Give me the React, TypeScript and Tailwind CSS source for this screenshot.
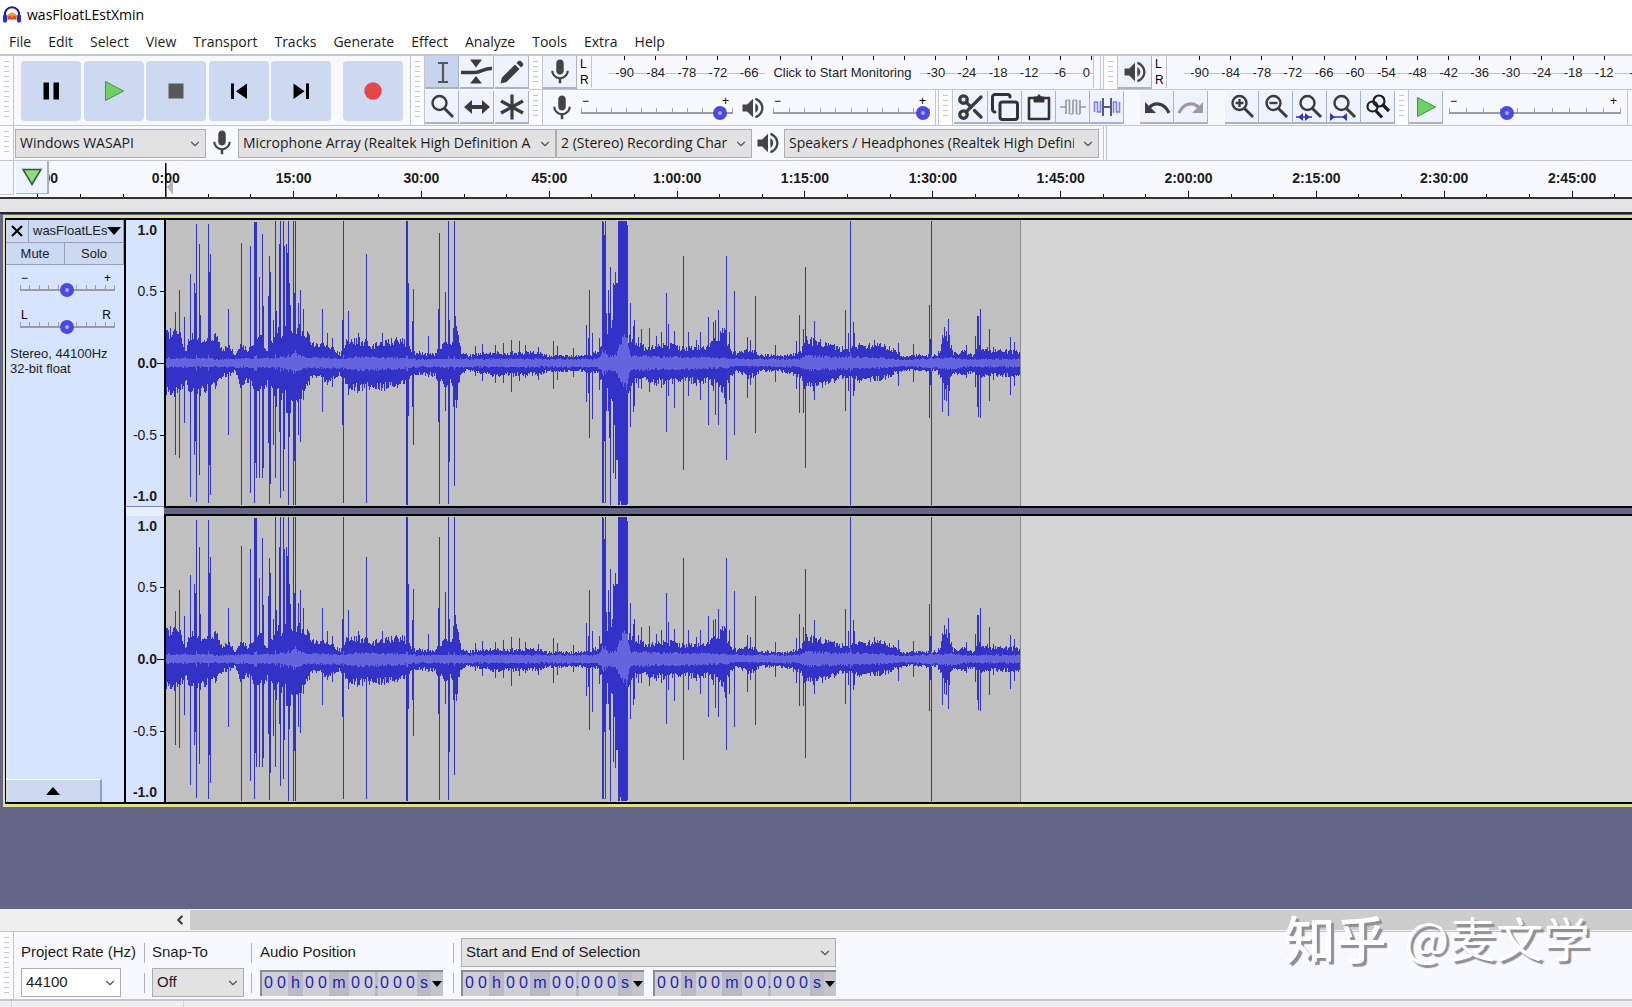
import React, { useState } from 'react';
import { ChevronDown, ChevronLeft, Copy, Scissors } from 'lucide-react';
import { MdMic, MdVolumeUp } from 'react-icons/md';

const MENUS = ['File', 'Edit', 'Select', 'View', 'Transport', 'Tracks', 'Generate', 'Effect', 'Analyze', 'Tools', 'Extra', 'Help'];

const TIMES = ['-15:00', '0:00', '15:00', '30:00', '45:00', '1:00:00', '1:15:00', '1:30:00', '1:45:00', '2:00:00', '2:15:00', '2:30:00', '2:45:00'];

// --- Waveform data ---
// [x, level above zero, level below zero], in pixels
type Point = [number, number, number];

const ENVELOPE: Point[] = [
  [0, 31, 30], [14, 26, 28], [19, 12, 15], [24, 28, 33], [37, 22, 25], [44, 27, 27], [51, 24, 20], [57, 12, 12],
  [62, 20, 12], [69, 8, 7], [74, 18, 22], [81, 13, 18], [87, 18, 24], [94, 25, 28], [101, 12, 20], [107, 28, 28],
  [127, 36, 36], [137, 32, 30], [142, 28, 20], [147, 18, 12], [160, 18, 17], [174, 9, 11], [181, 22, 24], [194, 22, 26],
  [207, 17, 22], [221, 21, 25], [236, 22, 20], [249, 10, 10], [269, 9, 12], [274, 17, 20], [292, 24, 20], [295, 11, 10],
  [302, 8, 7], [327, 10, 12], [374, 10, 11], [381, 7, 8], [417, 7, 8], [431, 11, 9], [436, 22, 20], [447, 40, 40],
  [463, 24, 25], [469, 20, 18], [481, 14, 17], [501, 18, 20], [514, 15, 17], [527, 15, 18], [544, 18, 18], [557, 30, 26],
  [564, 13, 13], [571, 9, 8], [584, 14, 14], [594, 8, 8], [617, 7, 8], [634, 10, 14], [639, 23, 24], [662, 19, 22],
  [674, 14, 14], [684, 14, 13], [689, 17, 17], [714, 18, 16], [727, 13, 11], [737, 7, 7], [771, 8, 8], [778, 24, 23],
  [783, 22, 20], [787, 10, 9], [797, 11, 11], [806, 8, 9], [814, 16, 13], [824, 12, 12], [854, 11, 12],
];

const SPIKES: Point[] = [
  [9, 51, 92], [13, 73, 95], [18, 46, 60], [24, 89, 134], [28, 80, 92], [29, 70, 78], [30, 139, 139], [33, 119, 112],
  [34, 48, 33], [42, 139, 140], [43, 91, 102], [44, 109, 132], [62, 54, 72], [75, 120, 142], [84, 117, 130], [88, 141, 140],
  [89, 141, 100], [90, 141, 115], [93, 86, 115], [96, 129, 115], [97, 57, 105], [102, 67, 80], [103, 107, 141], [104, 91, 121],
  [107, 43, 82], [109, 142, 115], [110, 52, 44], [113, 119, 69], [114, 142, 135], [117, 142, 128], [118, 117, 86],
  [120, 119, 50], [121, 110, 50], [122, 142, 142], [123, 80, 74], [124, 58, 50], [127, 142, 142], [128, 70, 98],
  [129, 142, 142], [132, 60, 72], [134, 73, 79], [137, 54, 37], [141, 32, 23], [156, 54, 49], [161, 30, 22], [166, 25, 24],
  [176, 43, 62], [177, 142, 140], [182, 52, 32], [192, 30, 28], [200, 109, 140], [216, 30, 25], [240, 142, 142], [241, 142, 142],
  [242, 80, 53], [246, 42, 44], [247, 74, 82], [262, 27, 14], [272, 54, 59], [273, 130, 141], [279, 71, 48], [282, 142, 141],
  [283, 43, 99], [287, 35, 44], [288, 142, 123], [289, 47, 37], [290, 37, 45], [291, 32, 37], [309, 17, 13], [316, 19, 18],
  [329, 18, 20], [337, 20, 20], [345, 23, 29], [353, 22, 18], [359, 18, 15], [372, 16, 17], [387, 22, 26], [391, 17, 17],
  [407, 15, 14], [420, 38, 39], [422, 25, 30], [423, 73, 75], [426, 30, 56], [433, 25, 27], [436, 142, 140], [437, 141, 140],
  [438, 128, 78], [439, 142, 140], [440, 50, 48], [442, 73, 48], [443, 50, 75], [444, 96, 142], [447, 80, 110], [448, 78, 62],
  [449, 91, 116], [450, 80, 97], [451, 80, 97], [452, 142, 142], [453, 142, 142], [454, 142, 138], [455, 142, 142],
  [456, 142, 142], [457, 142, 142], [458, 142, 142], [459, 142, 142], [460, 142, 142], [461, 138, 141], [463, 28, 28],
  [464, 60, 64], [467, 37, 49], [468, 43, 43], [472, 26, 25], [475, 34, 26], [483, 35, 29], [490, 27, 23], [495, 31, 25],
  [500, 70, 69], [502, 39, 33], [508, 32, 45], [517, 107, 107], [522, 31, 33], [530, 23, 23], [534, 31, 37], [542, 46, 62],
  [547, 41, 28], [549, 43, 52], [552, 53, 62], [556, 35, 30], [558, 35, 35], [559, 33, 41], [560, 107, 97], [563, 31, 37],
  [568, 72, 72], [581, 26, 35], [584, 23, 22], [589, 67, 70], [609, 18, 19], [630, 22, 26], [633, 48, 50], [637, 34, 50],
  [639, 96, 105], [648, 42, 37], [679, 53, 48], [682, 30, 28], [684, 142, 142], [687, 41, 33], [688, 30, 28], [708, 23, 18],
  [732, 20, 23], [747, 19, 19], [763, 58, 55], [764, 24, 22], [765, 142, 142], [776, 28, 49], [778, 36, 37], [780, 32, 38],
  [782, 44, 53], [783, 28, 28], [800, 18, 15], [809, 27, 24], [811, 47, 44], [812, 47, 54], [814, 54, 55], [823, 34, 38],
  [827, 16, 17], [844, 26, 32], [848, 21, 23],
];

const RMS: Point[] = [
  [0, 5, 4], [60, 4, 4], [118, 5, 5], [130, 9, 8], [138, 6, 5], [176, 4, 5], [190, 6, 7], [230, 5, 6], [250, 4, 4],
  [430, 4, 4], [438, 10, 9], [442, 6, 7], [450, 8, 10], [457, 22, 20], [461, 24, 22], [464, 7, 7], [560, 5, 5],
  [570, 4, 3], [633, 4, 4], [640, 7, 7], [715, 5, 5], [735, 3, 3], [780, 5, 6], [800, 4, 4], [854, 4, 4],
];

const CLIP_WIDTH = 854;
const ZERO = 143;

function sample(points: Point[], x: number, side: 1 | 2) {
  const next = points.findIndex(p => p[0] > x);
  if (next < 1) return points[points.length - 1][side];
  const a = points[next - 1];
  const b = points[next];
  return a[side] + ((b[side] - a[side]) * (x - a[0])) / (b[0] - a[0]);
}

// Repeatable noise, so a clip looks the same on each render
function noise(n: number) {
  const v = Math.sin(n * 127.1 + 11.7) * 43758.5453;
  return v - Math.floor(v);
}

function buildPath(gain: number) {
  let peaks = '';
  let rms = '';
  for (let x = 0; x < CLIP_WIDTH; x++) {
    const spike = SPIKES.find(s => s[0] === x);
    const up0 = sample(ENVELOPE, x, 1) * (0.78 + 0.42 * noise(x));
    const down0 = sample(ENVELOPE, x, 2) * (0.78 + 0.42 * noise(x * 3));
    let up = spike ? Math.max(up0, spike[1]) : up0;
    let down = spike ? Math.max(down0, spike[2]) : down0;
    if (up < 138) up *= gain;
    if (down < 138) down *= gain;
    peaks += `M${x + 0.5} ${Math.round(ZERO - up)}V${Math.round(ZERO + down)}`;
    const loud = spike && spike[1] > 138 ? 3 : 0;
    const r1 = sample(RMS, x, 1) * (0.8 + 0.4 * noise(x * 5)) + loud;
    const r2 = sample(RMS, x, 2) * (0.8 + 0.4 * noise(x * 7)) + loud;
    rms += `M${x + 0.5} ${Math.round(ZERO - r1)}V${Math.round(ZERO + r2)}`;
  }
  return { peaks, rms };
}

const CHANNELS = [buildPath(1), buildPath(0.94)];

// --- Icons ---
function Mic() {
  return <MdMic className="size-[30px] text-[#444]" />;
}

function Speaker() {
  return <MdVolumeUp className="size-7 text-[#444]" />;
}

function Magnifier({ children }: { children?: React.ReactNode }) {
  return (
    <svg viewBox="0 0 28 28" className="size-7" fill="none" stroke="#3c3c3c" strokeWidth="2.4">
      <circle cx="11.5" cy="10" r="7" />
      <path d="M16.5 15.5L25 24" strokeWidth="3" />
      {children}
    </svg>
  );
}

const ICONS: Record<string, React.ReactNode> = {
  pause: <svg viewBox="0 0 24 24" className="size-6"><path d="M4.500 3.500h5.500v17H4.500zM14.500 3.500h5.500v17h-5.500z" /></svg>,
  play: <svg viewBox="0 0 24 24" className="size-6"><path d="M3.500 2.500v19L21.500 12z" fill="#6fd163" stroke="#4c8f48" /></svg>,
  stop: <svg viewBox="0 0 24 24" className="size-6"><path d="M4.500 4.500h15v15h-15z" fill="#595959" /></svg>,
  start: <svg viewBox="0 0 24 24" className="size-6"><path d="M4 4.500h3v15.500H4zM20 4.500V20L9 12.200z" /></svg>,
  end: <svg viewBox="0 0 24 24" className="size-6"><path d="M4.500 4.500V20l11-7.800zM17 4.500h3V20h-3z" /></svg>,
  record: <svg viewBox="0 0 24 24" className="size-6"><circle cx="12" cy="12" r="8.700" fill="#e64646" /></svg>,
  cursor: (
    <svg viewBox="0 0 28 28" className="size-7" fill="none" stroke="#555" strokeWidth="2.200">
      <path d="M10 5h10M15 5v19M10 24h10" />
    </svg>
  ),
  envelope: (
    <svg viewBox="0 0 32 28" className="h-7 w-8" fill="#3c3c3c">
      <path d="M9 1.500h12l-6 8zM15 18l6 7.500H9z" />
      <path d="M0 14.500h14c6 0 9-4.500 17-4" fill="none" stroke="#3c3c3c" strokeWidth="3.400" />
    </svg>
  ),
  pencil: (
    <svg viewBox="0 0 28 28" className="size-7" fill="#3c3c3c">
      <path d="M2.500 25.500l1.500-6L17 6.500l4.500 4.500L8.500 24zM18.500 5l2-2c1.500-1.500 6 2.500 4.500 4.500l-2 2z" />
    </svg>
  ),
  zoom: <Magnifier />,
  shift: (
    <svg viewBox="0 0 28 28" className="size-7" fill="#3c3c3c">
      <path d="M1 14l8-7v5h10V7l8 7-8 7v-5H9v5z" />
    </svg>
  ),
  multi: (
    <svg viewBox="0 0 28 28" className="size-7" stroke="#3c3c3c" strokeWidth="3.200">
      <path d="M14 1.500v25M3 8l22 12M3 20L25 8" />
    </svg>
  ),
  cut: <Scissors className="size-[30px] text-[#3a3a3a]" strokeWidth={2.6} />,
  copy: <Copy className="size-[30px] text-[#333]" strokeWidth={2.4} />,
  paste: (
    <svg viewBox="0 0 28 28" className="size-7" fill="none" stroke="#333" strokeWidth="2.600">
      <path d="M4 5h20v21H4z" strokeLinejoin="round" />
      <path d="M9 4h3l2-2.500L16 4h3v5H9z" fill="#333" stroke="#333" strokeWidth="1" />
    </svg>
  ),
  trim: (
    <svg viewBox="0 0 28 28" className="size-7" fill="none" stroke="#9a9a9a" strokeWidth="1.700">
      <path d="M1 14h6M21 14h6M7 7v14M10.500 7v14M14 7v14M17.500 7v14M21 7v14" />
      <path d="M7 7h3.500M10.500 21H14M14 7h3.500M17.500 21H21" strokeWidth="1" />
    </svg>
  ),
  silence: (
    <svg viewBox="0 0 28 28" className="size-7" fill="none" strokeWidth="1.600">
      <path d="M1.500 19V9h3v10h3V8M20.500 20V9h3v10h3V9" stroke="#7b82e0" />
      <path d="M10 5v18M18 5v18M10 14h8" stroke="#5a5a74" strokeWidth="2" />
    </svg>
  ),
  undo: (
    <svg viewBox="0 0 28 28" className="size-7" fill="#3c3c3c">
      <path d="M2 9v11h11z" />
      <path d="M6 15c5-6 15-6 20 5" fill="none" stroke="#3c3c3c" strokeWidth="3.200" />
    </svg>
  ),
  redo: (
    <svg viewBox="0 0 28 28" className="size-7" fill="#9c9c9c">
      <path d="M26 9v11H15z" />
      <path d="M22 15C17 9 7 9 2 20" fill="none" stroke="#9c9c9c" strokeWidth="3.200" />
    </svg>
  ),
  zoomIn: <Magnifier><path d="M7.500 10h8M11.500 6v8" /></Magnifier>,
  zoomOut: <Magnifier><path d="M7.500 10h8" /></Magnifier>,
  fitSelection: (
    <Magnifier>
      <path d="M0 24h16" stroke="#3434c4" strokeWidth="1.500" />
      <path d="M2 24l5-4v8zM14 24l-5-4v8z" fill="#3434c4" stroke="none" />
    </Magnifier>
  ),
  fitProject: (
    <Magnifier>
      <path d="M0 24h17" stroke="#3434c4" strokeWidth="1.500" />
      <path d="M0 20v8l5-4zM17 20v8l-5-4z" fill="#3434c4" stroke="none" />
    </Magnifier>
  ),
  zoomToggle: (
    <svg viewBox="0 0 28 28" className="size-7" fill="none" stroke="#1c1c1c" strokeWidth="2.200">
      <circle cx="15" cy="8" r="5.500" />
      <path d="M19 12l6 6M12 18l6 6.500" strokeWidth="3.200" />
      <circle cx="8.500" cy="13.500" r="5" />
    </svg>
  ),
};

function Logo() {
  return (
    <svg viewBox="0 0 20 20" className="size-5" fill="none">
      <path d="M5 10l5-3 5 3v5H5z" fill="#f5a02c" />
      <path d="M6 12l2-2 2 3 2-3 2 2v2H6z" fill="#e5451c" />
      <path d="M3 12C1 -1 19 -1 17 12" stroke="#1b1b9e" strokeWidth="2" />
      <rect x="1" y="9.500" width="4" height="8" rx="1.500" fill="#2a2ad8" />
      <rect x="15" y="9.500" width="4" height="8" rx="1.500" fill="#2a2ad8" />
    </svg>
  );
}

// --- Toolbar parts ---
function Grip() {
  return (
    <div className="w-[14px] shrink-0 self-stretch border-r border-[#c4c6cc] bg-[#fcfcfe] px-1 py-[5px]">
      <div className="h-full w-[5px] bg-[repeating-linear-gradient(to_bottom,#c4c6cc_0_1px,transparent_1px_5px)]" />
    </div>
  );
}

function ToolButton({ icon, label, active }: { icon: React.ReactNode; label: string; active?: boolean }) {
  return (
    <button
      aria-label={label}
      className={`flex h-[33px] w-[34px] shrink-0 items-center justify-center overflow-hidden border-r border-b-2 border-[#aab2c6] ${active ? 'bg-[#c6d4ee]' : 'bg-[#eef3ff]'}`}
    >
      {icon}
    </button>
  );
}

function BigButton({ icon, label }: { icon: string; label: string }) {
  return (
    <button aria-label={label} className="flex size-[60px] items-center justify-center rounded bg-[#ccd9f0]">
      {ICONS[icon]}
    </button>
  );
}

interface SliderProps {
  label: string;
  value: number;
  className: string;
  left?: string;
  right?: string;
}

function Slider({ label, value, className, left = '−', right = '+' }: SliderProps) {
  const [current, setCurrent] = useState(value);
  return (
    <div className={`shrink-0 ${className}`}>
      <div className="flex h-[11px] justify-between pr-1 pl-px text-xs leading-3 text-black">
        <span>{left}</span>
        <span>{right}</span>
      </div>
      <div className="relative">
        <div className="absolute inset-x-0 top-[2px] flex h-1 justify-between">
          {Array.from({ length: 11 }, (_, i) => (
            <i key={i} className="w-px bg-[#a0a0a0]" />
          ))}
        </div>
        <input
          type="range"
          aria-label={label}
          value={current}
          onChange={e => setCurrent(Number(e.target.value))}
          className="relative block h-[14px] w-full appearance-none bg-transparent [&::-webkit-slider-runnable-track]:h-[2px] [&::-webkit-slider-runnable-track]:bg-[#9c9c9c] [&::-webkit-slider-thumb]:-mt-[6px] [&::-webkit-slider-thumb]:size-[14px] [&::-webkit-slider-thumb]:appearance-none [&::-webkit-slider-thumb]:rounded-full [&::-webkit-slider-thumb]:border-[5px] [&::-webkit-slider-thumb]:border-[#4a4ae0] [&::-webkit-slider-thumb]:bg-[#a8a8f4]"
        />
      </div>
    </div>
  );
}

function Meter({ className, monitor }: { className: string; monitor?: boolean }) {
  const levels = Array.from({ length: 16 }, (_, i) => -90 + i * 6);
  const cells = monitor ? levels.filter(l => l < -60 || l > -36) : levels;
  return (
    <div className={`h-8 overflow-hidden border-l border-[#c4c6cc] pl-[17px] ${className}`}>
      <div className="grid h-1 w-[498px] grid-cols-16">
        {levels.map(l => (
          <i key={l} className="mx-auto w-px bg-black" />
        ))}
      </div>
      <div className="grid h-[26px] w-[498px] grid-cols-16 text-[13px] text-[#222]">
        {cells.map(l => (
          <React.Fragment key={l}>
            {monitor && l === -30 && (
              <button className="col-span-5 text-center whitespace-nowrap">Click to Start Monitoring</button>
            )}
            <span className="flex items-center before:h-px before:flex-1 before:bg-[#c0c0c8] after:h-px after:flex-1 after:bg-[#c0c0c8] last:pr-[10px]">
              {l}
            </span>
          </React.Fragment>
        ))}
      </div>
    </div>
  );
}

function Select({ label, options, className }: { label: string; options: string[]; className: string }) {
  return (
    <div className={`relative shrink-0 ${className}`}>
      <select
        aria-label={label}
        className="h-[29px] w-full appearance-none overflow-hidden border border-[#adadad] bg-inherit pr-6 pl-1 text-[#1c1c1c] outline-none"
      >
        {options.map(o => (
          <option key={o}>{o}</option>
        ))}
      </select>
      <ChevronDown className="pointer-events-none absolute top-2 right-1 size-[14px] text-[#555]" strokeWidth={2} />
    </div>
  );
}

// Digits sit on light cells, the units between them on darker ones
function TimeField({ label }: { label: string }) {
  const widths: Record<string, string> = { h: 'w-[15px]', m: 'w-5', '.': 'w-[3px]', s: 'w-[14px]' };
  return (
    <div
      role="group"
      aria-label={label}
      className="flex h-[26px] w-[183px] border-t-2 border-l-2 border-[#8a8a92] bg-[#b9bac8] text-base leading-[22px] text-[#2323b4]"
    >
      {'00h00m00.000s'.split('').map((c, i) => (
        <span key={i} className={`flex justify-center ${widths[c] ?? 'w-[13px] bg-[#cfcfd7]'}`}>
          {c}
        </span>
      ))}
      <button aria-label={`${label} format`} className="flex flex-1 items-center justify-center bg-[#c4c4cc]">
        <svg viewBox="0 0 10 6" className="h-[6px] w-[10px]"><path d="M0 0h10L5 6z" /></svg>
      </button>
    </div>
  );
}

function Ruler() {
  return (
    <div className="relative h-[38px] overflow-hidden border-b-2 border-[#333] bg-[#f8f9ff]">
      <div className="-mr-1 -ml-[26px] grid h-full grid-cols-13 text-sm font-bold text-[#1a1a1a]">
        {TIMES.map(t => (
          <div key={t} className="flex flex-col justify-between pt-[7px]">
            <span className="text-center leading-5">{t}</span>
            <div className="grid grid-cols-3 items-end justify-items-center">
              <i className="h-[3px] w-px bg-black" />
              <i className="h-[6px] w-px bg-black" />
              <i className="h-[3px] w-px bg-black" />
            </div>
          </div>
        ))}
      </div>
      <div className="absolute top-0 left-0 h-[34px] w-[14px] border-r border-b border-[#c4c6cc] bg-[#f8f9ff]" />
      <button aria-label="Pin play head" className="absolute top-0 left-4 flex h-[33px] w-[33px] items-center justify-center border-r-2 border-b border-[#aab2c6] bg-[#eef3ff]">
        <svg viewBox="0 0 20 18" className="h-[18px] w-5"><path d="M1 1.500h18L10 16.500z" fill="#8fdc80" stroke="#33562f" strokeWidth="1.500" /></svg>
      </button>
      <svg viewBox="0 0 10 38" className="absolute top-0 left-[165px] h-[38px] w-[10px]">
        <path d="M8 19v15L2 26z" fill="#b4b4b8" />
        <path d="M0 2h1.500v36H0z" />
      </svg>
    </div>
  );
}

function Channel({ path }: { path: { peaks: string; rms: string } }) {
  const labels = ['1.0', '0.5', '0.0', '-0.5', '-1.0'];
  return (
    <div className="flex h-[286px]">
      <div className="grid w-[38px] shrink-0 grid-rows-[20px_102px_42px_102px_20px] bg-[#d6e4ff] text-sm text-[#1a1a1a]">
        {labels.map((l, i) => (
          <div
            key={l}
            className={`flex items-center justify-end ${i % 2 ? 'after:ml-[3px] after:h-px after:w-1 after:bg-black' : 'font-bold'} ${i === 2 ? 'after:h-px after:w-[7px] after:bg-black' : ''} ${i === 0 || i === 4 ? 'pr-[7px]' : ''}`}
          >
            {l}
          </div>
        ))}
      </div>
      <div className="flex flex-1 border-l-2 border-black bg-[#d5d5d5]">
        <svg viewBox="0 0 854 286" className="box-content h-[286px] w-[854px] shrink-0 border-r border-[#8c8c8c] bg-[#c0c0c0]" shapeRendering="crispEdges">
          <path d={path.peaks} stroke="#3232c8" />
          <path d={path.rms} stroke="#6464dc" />
        </svg>
      </div>
    </div>
  );
}

function TrackPanel() {
  const button = 'border-r border-b border-[#94a0ba] bg-[#ccd9f0]';
  return (
    <div className="flex w-[120px] shrink-0 flex-col border-r-2 border-black bg-[#d6e4ff] text-[13px] text-[#1c1c1c]">
      <div className="flex h-[23px]">
        <button aria-label="Close track" className={`flex w-[23px] items-center justify-center ${button}`}>
          <svg viewBox="0 0 12 12" className="size-3" stroke="#000" strokeWidth="2"><path d="M1 1l10 10M11 1L1 11" /></svg>
        </button>
        <button className={`flex flex-1 items-center pl-1 ${button}`}>
          wasFloatLEs
          <svg viewBox="0 0 14 8" className="h-2 w-[14px] shrink-0"><path d="M0 0h14L7 8z" /></svg>
        </button>
      </div>
      <div className="grid h-[22px] grid-cols-2">
        <button className={button}>Mute</button>
        <button className={button}>Solo</button>
      </div>
      <div className="flex flex-col gap-3 pt-[7px] pl-[14px]">
        <Slider label="Gain" value={49} className="w-[95px]" />
        <Slider label="Pan" value={49} className="w-[95px]" left="L" right="R" />
      </div>
      <p className="pt-3 pl-1 leading-[15px] whitespace-nowrap">
        Stereo, 44100Hz
        <br />
        32-bit float
      </p>
      <button aria-label="Collapse track" className="mt-auto flex h-[23px] w-24 items-center justify-center border-t border-r-2 border-t-white border-r-[#94a0ba] bg-[#ccd9f0]">
        <svg viewBox="0 0 14 8" className="h-2 w-[14px]"><path d="M0 8h14L7 0z" /></svg>
      </button>
    </div>
  );
}

function Toolbars() {
  return (
    <div className="flex h-[71px] overflow-hidden border-t-2 border-[#c4c6cc]">
      <Grip />
      <div className="flex shrink-0 items-center gap-3 pr-[7px] pl-[7px]">
        <div className="flex w-[310px] justify-between">
          <BigButton icon="pause" label="Pause" />
          <BigButton icon="play" label="Play" />
          <BigButton icon="stop" label="Stop" />
          <BigButton icon="start" label="Skip to start" />
          <BigButton icon="end" label="Skip to end" />
        </div>
        <BigButton icon="record" label="Record" />
      </div>
      <div className="flex shrink-0 border-l border-[#c4c6cc]">
        <Grip />
        <div className="grid grid-cols-3 content-between gap-x-px pb-px">
          <ToolButton icon={ICONS.cursor} label="Selection tool" active />
          <ToolButton icon={ICONS.envelope} label="Envelope tool" />
          <ToolButton icon={ICONS.pencil} label="Draw tool" />
          <ToolButton icon={ICONS.zoom} label="Zoom tool" />
          <ToolButton icon={ICONS.shift} label="Time shift tool" />
          <ToolButton icon={ICONS.multi} label="Multi tool" />
        </div>
      </div>
      <div className="flex min-w-0 flex-1 flex-col">
        <div className="flex h-[34px] border-b border-[#c4c6cc]">
          <Grip />
          <ToolButton icon={<Mic />} label="Recording meter" />
          <div className="w-[14px] shrink-0 pl-[3px] text-xs leading-4">L<br />R</div>
          <Meter className="w-[503px] shrink-0 border-r" monitor />
          <div className="ml-[6px] flex border-l-4 border-double border-[#c4c6cc]">
            <Grip />
          </div>
          <ToolButton icon={<Speaker />} label="Playback meter" />
          <div className="w-[14px] shrink-0 pl-[3px] text-xs leading-4">L<br />R</div>
          <Meter className="flex-1" />
        </div>
        <div className="flex h-[35px] items-center">
          <Grip />
          <div className="flex w-[38px] shrink-0 justify-center"><Mic /></div>
          <Slider label="Recording volume" value={96} className="w-[152px]" />
          <div className="flex w-[40px] shrink-0 justify-center"><Speaker /></div>
          <Slider label="Playback volume" value={100} className="w-[157px]" />
          <div className="ml-[5px] flex self-stretch border-l-4 border-double border-[#c4c6cc]">
            <Grip />
          </div>
          <div className="flex pl-px">
            <ToolButton icon={ICONS.cut} label="Cut" />
            <ToolButton icon={ICONS.copy} label="Copy" />
            <ToolButton icon={ICONS.paste} label="Paste" />
            <ToolButton icon={ICONS.trim} label="Trim audio" />
            <ToolButton icon={ICONS.silence} label="Silence audio" />
          </div>
          <div className="ml-4 flex">
            <ToolButton icon={ICONS.undo} label="Undo" />
            <ToolButton icon={ICONS.redo} label="Redo" />
          </div>
          <div className="ml-[17px] flex">
            <ToolButton icon={ICONS.zoomIn} label="Zoom in" />
            <ToolButton icon={ICONS.zoomOut} label="Zoom out" />
            <ToolButton icon={ICONS.fitSelection} label="Fit selection" />
            <ToolButton icon={ICONS.fitProject} label="Fit project" />
            <ToolButton icon={ICONS.zoomToggle} label="Zoom toggle" />
          </div>
          <Grip />
          <ToolButton icon={ICONS.play} label="Play at speed" />
          <div className="mr-2 self-stretch border-r border-[#c4c6cc] px-[6px] pt-[5px]">
            <Slider label="Playback speed" value={32} className="w-[172px]" />
          </div>
        </div>
      </div>
    </div>
  );
}

function DeviceBar() {
  return (
    <div className="flex h-[36px] items-center border-y border-[#c4c6cc] text-sm">
      <Grip />
      <div className="flex h-full items-center border-r-4 border-double border-[#c4c6cc] pl-px font-['Open_Sans','Noto_Sans',sans-serif]">
        <Select label="Audio host" options={['Windows WASAPI']} className="w-[191px] bg-[#e2e2e2]" />
        <div className="flex w-8 justify-center"><Mic /></div>
        <Select label="Recording device" options={['Microphone Array (Realtek High Definition Audio)']} className="w-[318px] bg-[#e2e2e2]" />
        <Select label="Recording channels" options={['2 (Stereo) Recording Channels']} className="w-[196px] bg-[#e2e2e2]" />
        <div className="flex w-8 justify-center"><Speaker /></div>
        <Select label="Playback device" options={['Speakers / Headphones (Realtek High Definition Audio)']} className="mr-1 w-[315px] bg-[#e2e2e2]" />
      </div>
    </div>
  );
}

function SelectionBar() {
  const divider = 'border-l border-[#b0b2b8] h-5';
  return (
    <div className="flex h-[70px] border-t border-b-2 border-[#c4c6cc] text-[15px] text-[#1c1c1c]">
      <Grip />
      <div className="grid grid-cols-[123px_8px_99px_9px_193px_8px_192px_184px] grid-rows-[29px_29px] items-center gap-y-px pt-[6px] pl-[7px]">
        <span>Project Rate (Hz)</span>
        <div className={divider} />
        <span>Snap-To</span>
        <div className={divider} />
        <span>Audio Position</span>
        <div className={divider} />
        <Select label="Selection mode" options={['Start and End of Selection']} className="col-span-2 w-[375px] bg-[#e2e2e2]" />
        <Select label="Project rate" options={['44100']} className="w-[100px] bg-white" />
        <div className={divider} />
        <Select label="Snap to" options={['Off']} className="w-[92px] bg-[#e2e2e2]" />
        <div className={divider} />
        <TimeField label="Audio position" />
        <div className={divider} />
        <TimeField label="Selection start" />
        <TimeField label="Selection end" />
      </div>
    </div>
  );
}

export default function App() {
  return (
    <div className="relative flex min-h-screen flex-col overflow-hidden bg-[#f8f9ff] font-['Liberation_Sans',Arial,sans-serif]">
      <header className="flex h-[29px] items-center gap-[5px] bg-white pl-[2px] font-['Open_Sans','Noto_Sans',sans-serif] text-sm text-black">
        <Logo />
        <h1>wasFloatLEstXmin</h1>
      </header>
      <nav className="flex h-[25px] items-center gap-[17px] bg-white pl-[9px] font-['Open_Sans','Noto_Sans',sans-serif] text-sm text-[#1c1c1c]">
        {MENUS.map(m => (
          <button key={m}>{m}</button>
        ))}
      </nav>
      <Toolbars />
      <DeviceBar />
      <Ruler />
      <div className="h-[13px] bg-[#e4e4e4]" />

      <main className="flex flex-1 flex-col border-t-2 border-[#20242c] bg-[#646685]">
        <div className="mt-px ml-[3px] border-y-[3px] border-l-2 border-[#e3e08a]">
          <div className="flex border-y-2 border-l border-black">
            <TrackPanel />
            <div className="min-w-0 flex-1">
              <Channel path={CHANNELS[0]} />
              <div className="flex h-[10px]">
                <div className="w-[38px] border-t border-[#7d89a6] bg-[#e8f0ff]" />
                <div className="flex-1 border-y-2 border-black" />
              </div>
              <Channel path={CHANNELS[1]} />
            </div>
          </div>
        </div>
      </main>

      <div className="flex h-[22px] bg-[#f0f0f0]">
        <button aria-label="Scroll left" className="ml-[170px] flex w-5 items-center justify-center">
          <ChevronLeft className="size-[14px] text-[#444]" strokeWidth={4} />
        </button>
        <div className="my-px flex-1 bg-[#cdcdcd]" />
      </div>
      <SelectionBar />
      <footer className="flex h-[6px] bg-[#efefef]">
        <div className="w-3 border-r border-[#d4d4d4]" />
        <div className="w-[172px] border-r border-[#d4d4d4]" />
      </footer>

      <div className="pointer-events-none absolute right-[42px] bottom-10 flex items-center gap-[18px] font-['Noto_Sans_CJK_SC',sans-serif] text-[47px] leading-[60px] text-white [text-shadow:3px_3px_1px_#909094]">
        <span className="text-[51px] font-medium">知乎</span>
        <span>@麦文学</span>
      </div>
    </div>
  );
}
